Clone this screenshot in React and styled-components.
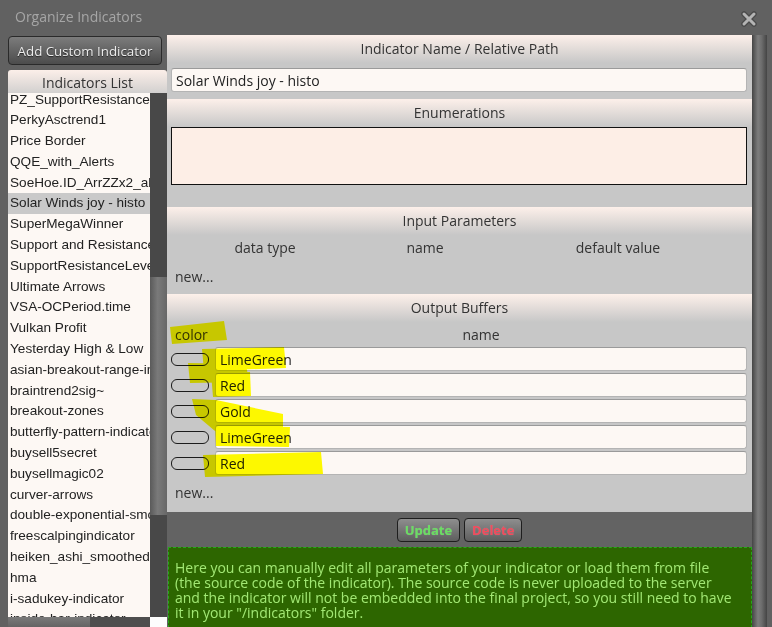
import React from "react";
import styled, { createGlobalStyle } from "styled-components";

const indicators = [
  "PZ_SupportResistance",
  "PerkyAsctrend1",
  "Price Border",
  "QQE_with_Alerts",
  "SoeHoe.ID_ArrZZx2_alerts",
  "Solar Winds joy - histo",
  "SuperMegaWinner",
  "Support and Resistance",
  "SupportResistanceLevels",
  "Ultimate Arrows",
  "VSA-OCPeriod.time",
  "Vulkan Profit",
  "Yesterday High & Low",
  "asian-breakout-range-indicator",
  "braintrend2sig~",
  "breakout-zones",
  "butterfly-pattern-indicator",
  "buysell5secret",
  "buysellmagic02",
  "curver-arrows",
  "double-exponential-smoothed",
  "freescalpingindicator",
  "heiken_ashi_smoothed",
  "hma",
  "i-sadukey-indicator",
  "inside-bar-indicator",
];

const buffers = ["LimeGreen", "Red", "Gold", "LimeGreen", "Red"];

// marker strokes over the buffer list
const marks = [
  "M170 327 L224 321 L227 340 L172 344 Z",
  "M202 349 L284 347 L286 368 L204 371 Z",
  "M188 363 L246 364 L249 382 L190 383 Z",
  "M211 373 L250 372 L251 396 L213 397 Z",
  "M192 399 L216 400 L283 414 L283 430 L215 431 L196 415 Z",
  "M215 426 L290 427 L289 447 L216 446 Z",
  "M203 455 L321 452 L323 474 L205 477 Z",
];

const GlobalStyle = createGlobalStyle`
  html, body {
    margin: 0;
    padding: 0;
    background: #6a6a6a;
    overflow: hidden;
  }
  * { box-sizing: border-box; }
`;

const App = () => {
  return (
    <>
      <GlobalStyle />
      <Dialog>
        <TitleBar>
          <Title>Organize Indicators</Title>
          <Close>
            <svg width="16" height="16" viewBox="0 0 16 16">
              <path d="M3 3 L13 13 M13 3 L3 13" stroke="#4a4a4a" strokeWidth="5.5" strokeLinecap="round" />
              <path d="M3 3 L13 13 M13 3 L3 13" stroke="#b4b4b4" strokeWidth="3" strokeLinecap="round" />
            </svg>
          </Close>
        </TitleBar>
        <Body>
          <LeftCol>
            <AddButton>Add Custom Indicator</AddButton>
            <ListPanel>
              <ListHeader>Indicators List</ListHeader>
              <ListRow>
                <Items>
                  <ItemList>
                    {indicators.map((name, i) => (
                      <Item key={i} $active={name === "Solar Winds joy - histo"}>
                        {name}
                      </Item>
                    ))}
                  </ItemList>
                </Items>
                <VScroll>
                  <VThumb />
                </VScroll>
              </ListRow>
              <HScroll>
                <HThumb />
                <HTrack />
                <Corner />
              </HScroll>
            </ListPanel>
          </LeftCol>

          <Main>
            <SectionHeader>Indicator Name / Relative Path</SectionHeader>
            <SectionBody $pt={5} $pb={7}>
              <Field>Solar Winds joy - histo</Field>
            </SectionBody>

            <SectionHeader>Enumerations</SectionHeader>
            <SectionBody $pt={0} $pb={22}>
              <EnumBox />
            </SectionBody>

            <SectionHeader>Input Parameters</SectionHeader>
            <SectionBody $pt={0} $pb={5}>
              <ParamCols>
                <span>data type</span>
                <span>name</span>
                <span>default value</span>
              </ParamCols>
              <NewLink>new...</NewLink>
            </SectionBody>

            <SectionHeader>Output Buffers</SectionHeader>
            <SectionBody $pt={0} $pb={7}>
              <BufferCols>
                <ColorLabel>color</ColorLabel>
                <NameLabel>name</NameLabel>
              </BufferCols>
              <BufferList>
                {buffers.map((b, i) => (
                  <BufferRow key={i}>
                    <Swatch />
                    <BufferName>{b}</BufferName>
                  </BufferRow>
                ))}
              </BufferList>
              <NewLink>new...</NewLink>
            </SectionBody>

            <Actions>
              <ActionButton $tone="#6ade62">Update</ActionButton>
              <ActionButton $tone="#f24a5c">Delete</ActionButton>
            </Actions>

            <Info>
              Here you can manually edit all parameters of your indicator or load them from file
              <br />
              (the source code of the indicator). The source code is never uploaded to the server
              <br />
              and the indicator will not be embedded into the final project, so you still need to have
              <br />
              it in your "/indicators" folder.
            </Info>
          </Main>
          <MainScroll />
        </Body>

        <Marks viewBox="0 0 772 627" width="772" height="627">
          {marks.map((d, i) => (
            <path key={i} d={d} fill="#ffff00" />
          ))}
        </Marks>
      </Dialog>
    </>
  );
};

const Dialog = styled.div`
  position: relative;
  width: 772px;
  height: 627px;
  overflow: hidden;
  display: flex;
  flex-direction: column;
  background: #616161;
  font-family: "Open Sans", "DejaVu Sans", sans-serif;
`;

const TitleBar = styled.div`
  height: 35px;
  flex: none;
  display: flex;
  align-items: center;
  justify-content: space-between;
  padding: 0 15px 0 15px;
`;

const Title = styled.div`
  color: #a6a6a6;
  font-size: 14px;
  padding-bottom: 2px;
`;

const Close = styled.div`
  display: flex;
  margin-top: 2px;
`;

const Body = styled.div`
  flex: 1;
  min-height: 0;
  display: flex;
  padding-left: 8px;
  padding-right: 5px;
`;

const LeftCol = styled.div`
  width: 159px;
  flex: none;
  display: flex;
  flex-direction: column;
`;

const AddButton = styled.button`
  width: 154px;
  height: 29px;
  margin-top: 1px;
  padding: 0;
  border: 1px solid #2a2a2a;
  border-radius: 4px;
  background: linear-gradient(#7c7c7c, #4c4c4c);
  color: #ececec;
  font-family: inherit;
  font-size: 13.3px;
  text-shadow: 0 1px 1px #222;
`;

const ListPanel = styled.div`
  flex: 1;
  min-height: 0;
  margin-top: 5px;
  display: flex;
  flex-direction: column;
`;

const ListHeader = styled.div`
  height: 23px;
  flex: none;
  display: flex;
  align-items: center;
  justify-content: center;
  padding-top: 2px;
  border-radius: 3px 3px 0 0;
  background: linear-gradient(#fcefe9, #d2d0cf);
  color: #333;
  font-size: 14px;
`;

const ListRow = styled.div`
  flex: 1;
  min-height: 0;
  display: flex;
`;

const Items = styled.div`
  width: 142px;
  overflow: hidden;
  background: #fdf8f4;
`;

const ItemList = styled.ul`
  list-style: none;
  margin: -3.5px 0 0;
  padding: 0;
`;

const Item = styled.li`
  height: 20.8px;
  line-height: 20.8px;
  padding-left: 2px;
  white-space: nowrap;
  font-family: "Liberation Sans", Arial, sans-serif;
  font-size: 13.6px;
  color: #222;
  background: ${(p) => (p.$active ? "#c9c9c9" : "transparent")};
`;

const VScroll = styled.div`
  width: 17px;
  display: flex;
  flex-direction: column;
  background: #484848;
  padding-top: 184px;
`;

const VThumb = styled.div`
  height: 238px;
  background: linear-gradient(to right, #5a5a5a, #7a7a7a 45%, #676767);
`;

const HScroll = styled.div`
  height: 10px;
  flex: none;
  display: flex;
`;

const HThumb = styled.div`
  width: 82px;
  background: linear-gradient(#7a7a7a, #646464);
`;

const HTrack = styled.div`
  width: 60px;
  background: #4e4e4e;
`;

const Corner = styled.div`
  flex: 1;
  background: #fdfdfd;
`;

const Main = styled.div`
  width: 585px;
  flex: none;
  display: flex;
  flex-direction: column;
`;

const SectionHeader = styled.div`
  height: 28px;
  flex: none;
  display: flex;
  align-items: center;
  justify-content: center;
  padding-bottom: 2px;
  background: linear-gradient(#fdf0ea, #c7c7c7);
  color: #333;
  font-size: 14px;
`;

const SectionBody = styled.div`
  flex: none;
  background: #c7c7c7;
  padding: ${(p) => p.$pt}px 5px ${(p) => p.$pb}px 4px;
  color: #333;
  font-size: 14px;
`;

const Field = styled.div`
  height: 24px;
  display: flex;
  align-items: center;
  padding-left: 4px;
  border: 1px solid #b4b4b4;
  border-top-color: #9a9a9a;
  border-radius: 3px;
  background: #fdf8f4;
  color: #222;
  font-size: 14px;
`;

const EnumBox = styled.div`
  height: 58px;
  border: 1px solid #111;
  background: #fdeee6;
`;

const ParamCols = styled.div`
  height: 24px;
  display: grid;
  grid-template-columns: 188px 132px 1fr;
  align-items: center;
  text-align: center;

  span:last-child {
    padding-right: 2px;
  }
`;

const NewLink = styled.div`
  height: 24px;
  margin-top: 6px;
  line-height: 24px;
  padding-left: 4px;
  color: #333;
`;

const BufferCols = styled.div`
  height: 24px;
  display: grid;
  grid-template-columns: 44px 1fr;
  align-items: center;
`;

const ColorLabel = styled.span`
  padding-left: 4px;
`;

const NameLabel = styled.span`
  text-align: center;
`;

const BufferList = styled.div`
  display: flex;
  flex-direction: column;
  gap: 2px;
  margin-top: 1px;
`;

const BufferRow = styled.div`
  display: grid;
  grid-template-columns: 38px 1fr;
  column-gap: 6px;
  align-items: center;
`;

const Swatch = styled.div`
  height: 13px;
  border: 1.5px solid #1c1c1c;
  border-radius: 6px;
`;

const BufferName = styled(Field)``;

const Actions = styled.div`
  height: 35px;
  flex: none;
  display: flex;
  align-items: center;
  justify-content: center;
  gap: 4px;
  background: #636363;
`;

const ActionButton = styled.button`
  height: 24px;
  padding: 0 7px;
  border: 1px solid #1e1e1e;
  border-radius: 4px;
  background: linear-gradient(#8e8e8e, #5e5e5e);
  color: ${(p) => p.$tone};
  font-family: inherit;
  font-weight: bold;
  font-size: 13px;
  text-shadow: 0 0 1px rgba(255, 255, 255, 0.25);
`;

const Info = styled.div`
  flex: 1;
  margin-left: 1px;
  padding: 12px 6px;
  border: 1px dashed #25a81a;
  background: #2d6600;
  color: #a2e874;
  font-size: 14px;
  line-height: 15px;
  white-space: nowrap;
`;

const MainScroll = styled.div`
  width: 15px;
  flex: none;
  background: linear-gradient(to right, #454545, #7d7d7d 40%, #6c6c6c 65%, #444);
`;

const Marks = styled.svg`
  position: absolute;
  left: 0;
  top: 0;
  pointer-events: none;
  mix-blend-mode: multiply;
`;

export default App;
